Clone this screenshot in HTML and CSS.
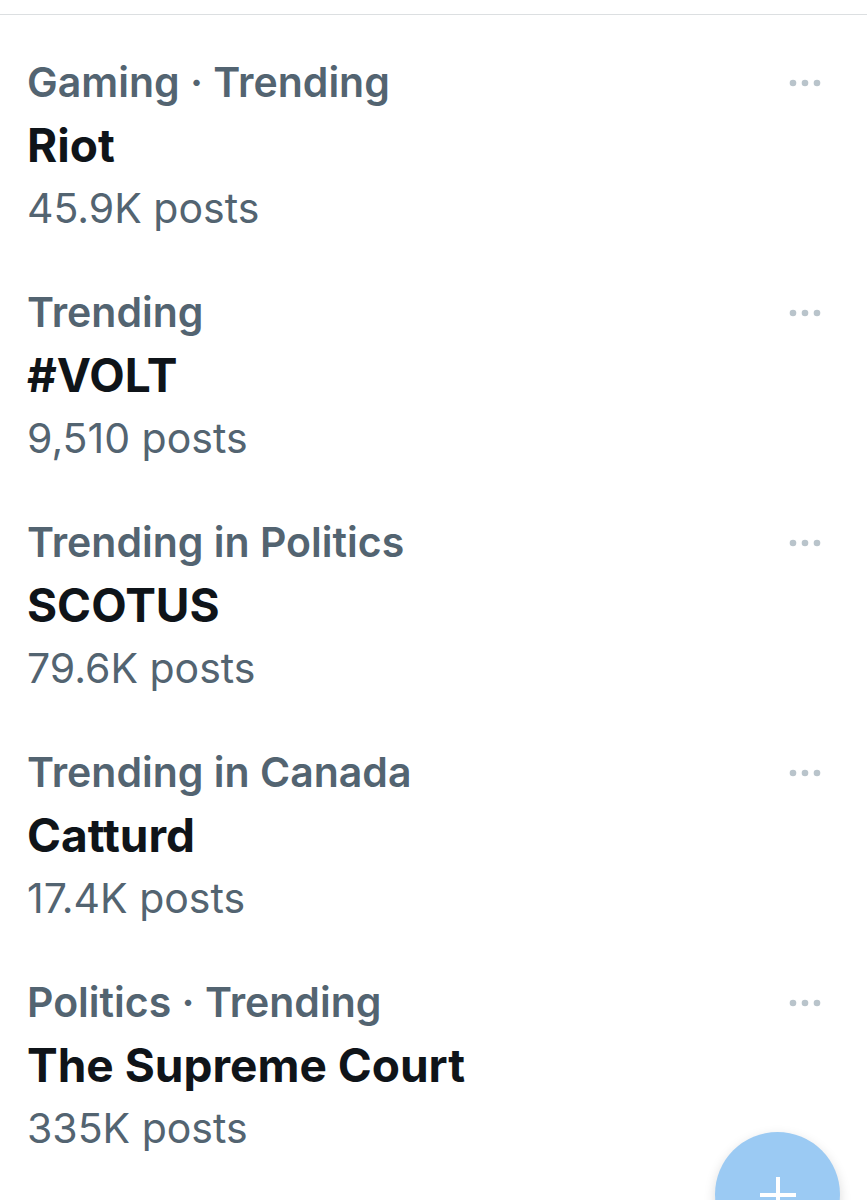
FILE: index.html
```html
<!doctype html>
<html lang="en">
	<head>
		<meta charset="utf-8" />
		<meta name="viewport" content="width=device-width, initial-scale=1" />
		<title>Trending</title>
		<link rel="stylesheet" href="styles.css">
	</head>
	<body>
		<main class="trends">
			<article class="trend">
				<div class="info">
					<p class="context">Gaming · Trending</p>
					<h2 class="name">Riot</h2>
					<p class="count">45.9K posts</p>
				</div>
				<button class="more" aria-label="More"><svg viewBox="0 0 32 8"><circle cx="4" cy="4" r="3.3"/><circle cx="16" cy="4" r="3.3"/><circle cx="28" cy="4" r="3.3"/></svg></button>
			</article>
			<article class="trend">
				<div class="info">
					<p class="context">Trending</p>
					<h2 class="name">#VOLT</h2>
					<p class="count">9,510 posts</p>
				</div>
				<button class="more" aria-label="More"><svg viewBox="0 0 32 8"><circle cx="4" cy="4" r="3.3"/><circle cx="16" cy="4" r="3.3"/><circle cx="28" cy="4" r="3.3"/></svg></button>
			</article>
			<article class="trend">
				<div class="info">
					<p class="context">Trending in Politics</p>
					<h2 class="name">SCOTUS</h2>
					<p class="count">79.6K posts</p>
				</div>
				<button class="more" aria-label="More"><svg viewBox="0 0 32 8"><circle cx="4" cy="4" r="3.3"/><circle cx="16" cy="4" r="3.3"/><circle cx="28" cy="4" r="3.3"/></svg></button>
			</article>
			<article class="trend">
				<div class="info">
					<p class="context">Trending in Canada</p>
					<h2 class="name">Catturd</h2>
					<p class="count">17.4K posts</p>
				</div>
				<button class="more" aria-label="More"><svg viewBox="0 0 32 8"><circle cx="4" cy="4" r="3.3"/><circle cx="16" cy="4" r="3.3"/><circle cx="28" cy="4" r="3.3"/></svg></button>
			</article>
			<article class="trend">
				<div class="info">
					<p class="context">Politics · Trending</p>
					<h2 class="name">The Supreme Court</h2>
					<p class="count">335K posts</p>
				</div>
				<button class="more" aria-label="More"><svg viewBox="0 0 32 8"><circle cx="4" cy="4" r="3.3"/><circle cx="16" cy="4" r="3.3"/><circle cx="28" cy="4" r="3.3"/></svg></button>
			</article>
		</main>
		<button class="compose" aria-label="New post"><svg viewBox="0 0 36 36"><path d="M18 0v36M0 18h36"/></svg></button>
	</body>
</html>
```
FILE: styles.css
```css
body {
	margin: 0;
	background: #fff;
	font-family: Inter, "Liberation Sans", sans-serif;
}

.trends {
	margin-top: 14px;
	border-top: 1px solid #dcdfe1;
	padding: 36px 46px 0 27px;
}

.trend {
	display: flex;
	justify-content: space-between;
	align-items: flex-start;
	margin-bottom: 41px;
}

.trend:last-child {
	margin-bottom: 0;
}

.context, .name, .count {
	margin: 0;
	font-size: 41px;
	line-height: 63px;
	color: #536471;
}

.context {
	font-weight: 600;
}

.name {
	font-size: 46px;
	font-weight: 700;
	color: #0f1419;
}

.more {
	display: flex;
	align-items: center;
	height: 63px;
	border: 0;
	padding: 0;
	background: none;
}

.more svg {
	width: 32px;
	height: 8px;
	fill: #b9c4cb;
}

/* floats half off the bottom edge */
.compose {
	position: fixed;
	right: 27px;
	bottom: -57px;
	display: flex;
	align-items: center;
	justify-content: center;
	width: 125px;
	height: 125px;
	border: 0;
	border-radius: 50%;
	padding: 0;
	background: #9bcaf3;
	box-shadow: 0 4px 12px rgba(0, 0, 0, .15);
}

.compose svg {
	width: 36px;
	height: 36px;
	fill: none;
	stroke: #fff;
	stroke-width: 4;
}
```
